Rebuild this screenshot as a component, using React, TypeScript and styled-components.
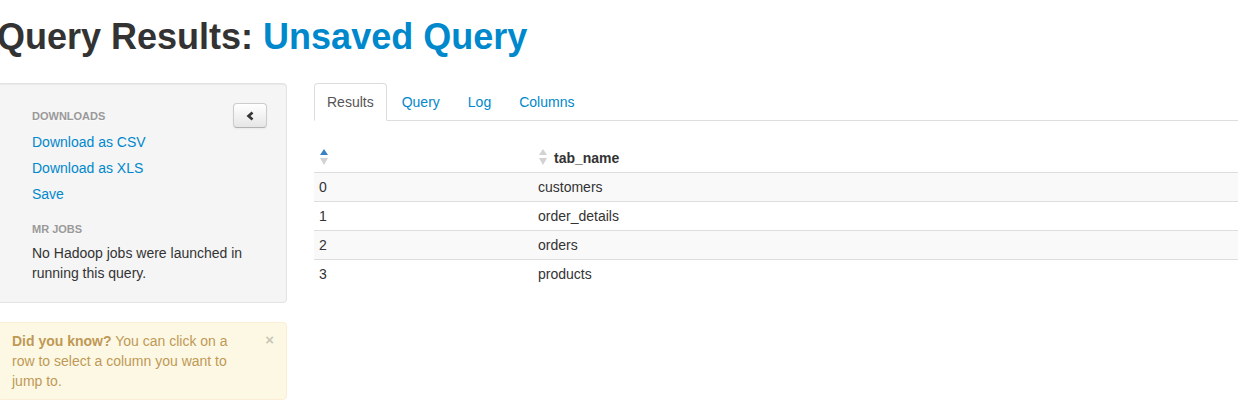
import React from "react";
import styled, { createGlobalStyle } from "styled-components";

const GlobalStyle = createGlobalStyle`
  html, body {
    margin: 0;
    padding: 0;
    background: #fff;
    overflow: hidden;
  }
  body {
    font-family: "Liberation Sans", Helvetica, Arial, sans-serif;
    font-size: 14px;
    line-height: 20px;
    color: #333;
  }
`;

const Page = styled.div`
  margin-left: -3px;
`;

const Title = styled.h1`
  margin: 17px 0 26px;
  font-size: 36px;
  line-height: 40px;
  font-weight: bold;
  color: #333;
  white-space: nowrap;

  span {
    color: #0088cc;
  }
`;

const Row = styled.div`
  display: flex;
  align-items: flex-start;
  gap: 27px;
`;

const Sidebar = styled.div`
  width: 290px;
  flex: none;
  display: flex;
  flex-direction: column;
  gap: 19px;
`;

const Well = styled.div`
  padding: 19px;
  background: #f5f5f5;
  border: 1px solid #e3e3e3;
  border-radius: 4px;
  box-shadow: inset 0 1px 1px rgba(0, 0, 0, 0.05);
`;

const CollapseButton = styled.button`
  float: right;
  width: 34px;
  height: 25px;
  padding: 0;
  display: flex;
  align-items: center;
  justify-content: center;
  background: linear-gradient(#ffffff, #e6e6e6);
  border: 1px solid #cccccc;
  border-bottom-color: #b3b3b3;
  border-radius: 4px;
  box-shadow: inset 0 1px 0 rgba(255, 255, 255, 0.2), 0 1px 2px rgba(0, 0, 0, 0.05);
  cursor: pointer;
`;

const NavList = styled.ul`
  list-style: none;
  margin: 0;
  padding: 0 15px;
`;

const NavHeader = styled.li<{ $spaced?: boolean }>`
  margin: ${(p) => (p.$spaced ? "9px" : "0")} -15px 0;
  padding: 3px 15px;
  font-size: 11px;
  font-weight: bold;
  line-height: 20px;
  color: #999;
  text-transform: uppercase;
  text-shadow: 0 1px 0 rgba(255, 255, 255, 0.5);
`;

const NavLink = styled.a`
  display: block;
  margin: 0 -15px;
  padding: 3px 15px;
  color: #0088cc;
  text-decoration: none;
  cursor: pointer;
`;

const NavText = styled.li`
  padding-top: 1px;
  line-height: 20px;
`;

const Alert = styled.div`
  padding: 8px 35px 8px 14px;
  background: #fcf8e3;
  border: 1px solid #fbeed5;
  border-radius: 4px;
  color: #c09853;
  text-shadow: 0 1px 0 rgba(255, 255, 255, 0.5);

  strong {
    font-weight: bold;
  }
`;

const Close = styled.button`
  float: right;
  position: relative;
  top: -1px;
  right: -23px;
  padding: 0;
  background: transparent;
  border: 0;
  font-family: "Liberation Sans", Helvetica, Arial, sans-serif;
  font-size: 15px;
  font-weight: bold;
  line-height: 20px;
  color: #000;
  opacity: 0.2;
  text-shadow: 0 1px 0 #fff;
  cursor: pointer;
`;

const Main = styled.div`
  flex: 1;
  min-width: 0;
`;

const Tabs = styled.ul`
  display: flex;
  list-style: none;
  margin: 0;
  padding: 0;
  border-bottom: 1px solid #ddd;
`;

const Tab = styled.li`
  margin-bottom: -1px;
`;

const TabLink = styled.a<{ $active?: boolean }>`
  display: block;
  margin-right: 2px;
  padding: 8px 12px;
  line-height: 20px;
  border: 1px solid ${(p) => (p.$active ? "#ddd" : "transparent")};
  border-bottom-color: transparent;
  border-radius: 4px 4px 0 0;
  background: ${(p) => (p.$active ? "#fff" : "transparent")};
  color: ${(p) => (p.$active ? "#555" : "#0088cc")};
  text-decoration: none;
  cursor: pointer;
`;

const Table = styled.table`
  width: 100%;
  margin-top: 23px;
  border-collapse: separate;
  border-spacing: 0;
`;

const Th = styled.th<{ $width?: number }>`
  width: ${(p) => (p.$width ? `${p.$width}px` : "auto")};
  padding: 4px 5px;
  line-height: 20px;
  text-align: left;
  font-weight: bold;
  vertical-align: bottom;
  white-space: nowrap;
  cursor: pointer;
`;

const Tr = styled.tr<{ $striped?: boolean }>`
  background: ${(p) => (p.$striped ? "#f9f9f9" : "transparent")};
`;

const Td = styled.td`
  padding: 4px 5px;
  line-height: 20px;
  border-top: 1px solid #ddd;
`;

const SortIcon = styled.svg`
  display: inline-block;
  vertical-align: middle;
  margin: -3px 7px 0 1px;
`;

const Sort = ({ active }: { active?: boolean }) => (
  <SortIcon width="8" height="17" viewBox="0 0 8 17">
    <path d="M4 0 L8 6 H0 Z" fill={active ? "#3a82c2" : "#d2d2d2"} />
    <path d="M0 9 H8 L4 16 Z" fill="#d2d2d2" />
  </SortIcon>
);

const rows = ["customers", "order_details", "orders", "products"];

export default function App() {
  return (
    <>
      <GlobalStyle />
      <Page>
        <Title>
          Query Results: <span>Unsaved Query</span>
        </Title>
        <Row>
          <Sidebar>
            <Well>
              <CollapseButton aria-label="Collapse">
                <svg width="9" height="10" viewBox="0 0 9 10">
                  <path
                    d="M6.5 1.5 L2.5 5 L6.5 8.5"
                    fill="none"
                    stroke="#333"
                    strokeWidth="2.6"
                    strokeLinejoin="miter"
                  />
                </svg>
              </CollapseButton>
              <NavList>
                <NavHeader>Downloads</NavHeader>
                <li>
                  <NavLink>Download as CSV</NavLink>
                </li>
                <li>
                  <NavLink>Download as XLS</NavLink>
                </li>
                <li>
                  <NavLink>Save</NavLink>
                </li>
                <NavHeader $spaced>MR Jobs</NavHeader>
                <NavText>No Hadoop jobs were launched in running this query.</NavText>
              </NavList>
            </Well>
            <Alert>
              <Close>×</Close>
              <strong>Did you know?</strong> You can click on a row to select a column you
              want to jump to.
            </Alert>
          </Sidebar>
          <Main>
            <Tabs>
              <Tab>
                <TabLink $active>Results</TabLink>
              </Tab>
              <Tab>
                <TabLink>Query</TabLink>
              </Tab>
              <Tab>
                <TabLink>Log</TabLink>
              </Tab>
              <Tab>
                <TabLink>Columns</TabLink>
              </Tab>
            </Tabs>
            <Table>
              <thead>
                <tr>
                  <Th $width={209}>
                    <Sort active />
                  </Th>
                  <Th>
                    <Sort />
                    tab_name
                  </Th>
                </tr>
              </thead>
              <tbody>
                {rows.map((name, i) => (
                  <Tr key={name} $striped={i % 2 === 0}>
                    <Td>{i}</Td>
                    <Td>{name}</Td>
                  </Tr>
                ))}
              </tbody>
            </Table>
          </Main>
        </Row>
      </Page>
    </>
  );
}
